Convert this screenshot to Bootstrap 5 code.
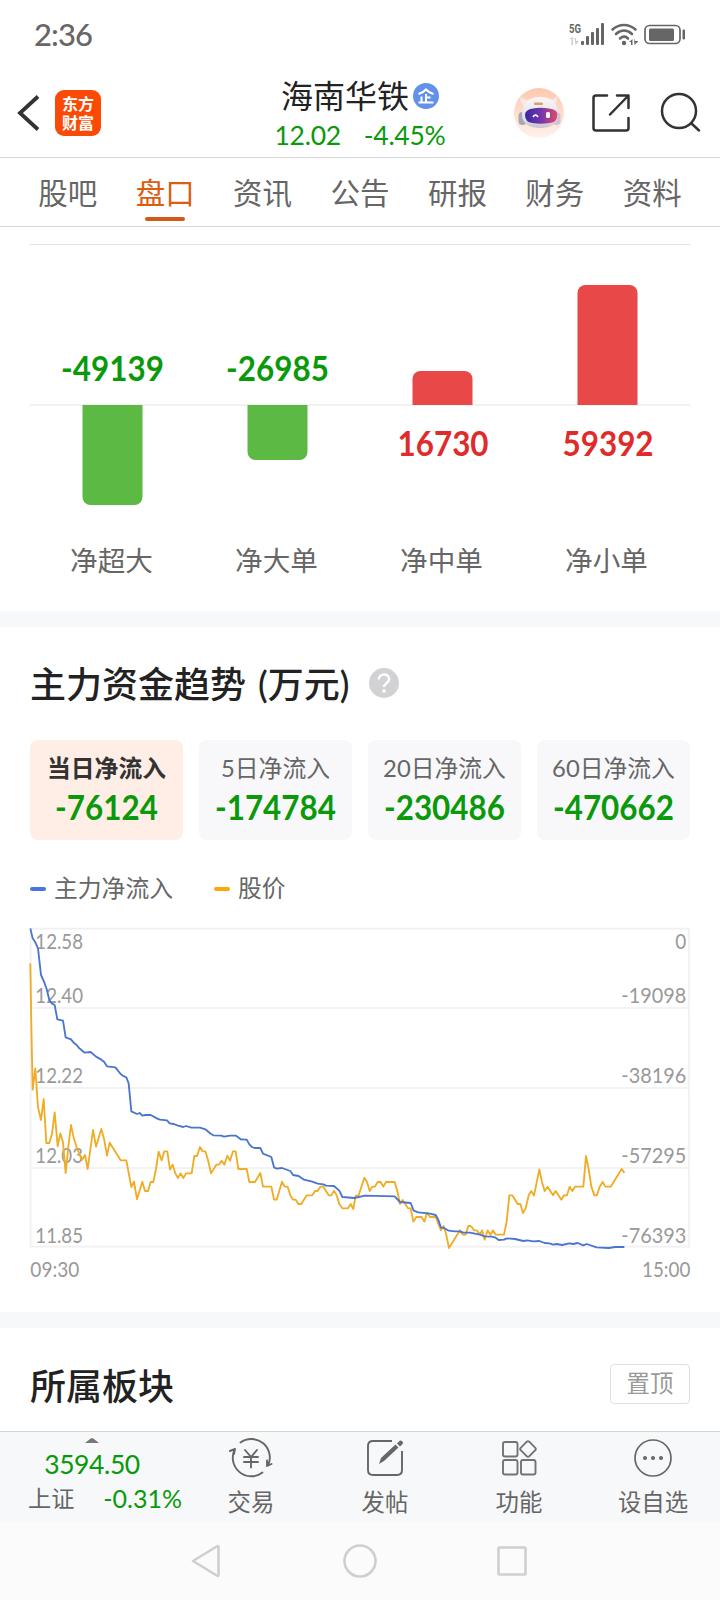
<!DOCTYPE html>
<html lang="zh-CN">
<head>
<meta charset="utf-8">
<meta name="viewport" content="width=device-width, initial-scale=1">
<title>海南华铁</title>
<link href="https://cdn.jsdelivr.net/npm/bootstrap@5.3.0/dist/css/bootstrap.min.css" rel="stylesheet">
<script src="https://cdn.jsdelivr.net/npm/bootstrap@5.3.0/dist/js/bootstrap.bundle.min.js"></script>
<style>
body{width:720px;height:1600px;overflow:hidden;background:#fff;color:#666;font-family:Lato,"Noto Sans CJK SC",sans-serif;font-size:24px;line-height:1}
svg{display:block;flex:none}
.down{color:#0a990a}
.up{color:#e02b2b}
.statusbar{height:68px;padding:0 34px 0 34px}
.clock{font-size:31px;letter-spacing:-.9px;font-weight:500}
.topbar{height:90px;border-bottom:1px solid #d4d6d8}
.side{width:240px;height:88px}
.logo{width:46px;height:46px;border-radius:9px;background:#fb4a05;color:#fff;font-size:16px;line-height:19px;font-weight:700}
.stock{font-size:32px;line-height:40px;color:#222}
.quote{font-size:26.5px;line-height:34px;letter-spacing:-.3px;padding-top:2px}
.tabs{height:69px;padding:0 19px;border-bottom:1px solid #d4d6d8}
.tabs a{flex:1;font-size:29.5px;line-height:70px;color:#666;text-decoration:none;text-align:center}
.tabs a.active{color:#dc5c10}
.tabs a.active::after{content:"";position:absolute;left:50%;bottom:5px;width:40px;height:4px;margin-left:-20px;border-radius:2px;background:#d2591a}
.flow{margin:17px 30px 0;height:367px;border-top:1px solid #e2e2e2}
.half{height:160px}
.half.upper{height:161px;border-bottom:2px solid #f1f1f2}
.half>div{width:165px}
.amount{font-size:34.5px;font-weight:700;line-height:40px}
.amount span{display:inline-block;transform:scaleX(.91)}
.bar-up,.bar-down{width:60px;transform:translateX(-.5px)}
.bar-up{background:#e84848;border-radius:8px 8px 0 0;margin-bottom:-1px}
.bar-down{background:#5bb944;border-radius:0 0 8px 8px;margin-top:-1px}
.flow-name{font-size:27.6px;line-height:40px;margin:-25px 1px 0 -1px}
.band{height:16px;background:#f7f8fa}
.heading{font-size:36px;line-height:48px;font-weight:500;color:#222}
.tile{flex:1;height:100px;border-radius:8px;background:#f8f8fa;padding-top:12px}
.tile .amount{margin:3px -10px 0}
.tile.active{background:#ffeee6}
.tile-name{font-size:23.8px;line-height:32px}
.tile.active .tile-name{color:#333;font-weight:700}
.key{width:16px;height:4px;border-radius:2px}
.pin{width:80px;height:40px;border:1px solid #e0e0e0;border-radius:4px;background:#fff;color:#999;font-size:23.4px}
.dock{height:91px;border-top:1px solid #d2d4d6;background:#f7f8fa}
.dock .index{width:184px}
.dock .item{width:134px;padding-top:6px}
.dock .label{font-size:23.4px;line-height:30px;margin-top:9px}
.sysnav{height:78px;background:#fbfbfb}
</style>
</head>
<body class="d-flex flex-column">

<div class="statusbar d-flex align-items-center justify-content-between">
  <span class="clock">2:36</span>
  <svg width="120" height="24" viewBox="566 22 120 24" fill="#666">
    <text x="569" y="33" font-family="Roboto" font-weight="700" font-size="12.5" textLength="12" lengthAdjust="spacingAndGlyphs">5G</text>
    <path d="M569 39l4-2v8h-1.500v-6zM574.500 38h1.500v3h3l-3.500 4z" fill="#ccc"/>
    <rect x="581" y="41" width="3" height="4" rx="1"/><rect x="586" y="36" width="3" height="9" rx="1"/><rect x="591" y="32" width="3" height="13" rx="1"/><rect x="596" y="28" width="3" height="17" rx="1"/><rect x="601" y="23" width="3" height="22" rx="1"/>
    <g fill="none" stroke="#666" stroke-width="2.600" stroke-linecap="round"><path d="M612.500 29.500c7-6 16-6 23 0M616 34c5-4.500 11-4.500 16 0M620 38.500c3-2.500 5.500-2.500 8 0"/></g>
    <circle cx="624" cy="43" r="2.200"/><path d="M629 42l3.500-3v6h-1.500v-3zM634 38l1 3h3.500l-4 4z"/>
    <rect x="645" y="25.500" width="35" height="18" rx="4.500" fill="none" stroke="#666" stroke-width="1.700"/><rect x="649" y="28.500" width="25" height="12.500" rx="1.500"/><rect x="682.500" y="29.500" width="2.500" height="10" rx="1"/>
  </svg>
</div>

<header class="topbar d-flex">
  <div class="side d-flex align-items-center">
    <svg class="ms-3" width="24" height="40" viewBox="16 92 24 40"><path d="M38 96.500L20 113l18 16.500" fill="none" stroke="#333" stroke-width="3.800"/></svg>
    <div class="logo d-flex flex-column justify-content-center text-center" style="margin:2px 0 0 15px"><span>东方</span><span>财富</span></div>
  </div>
  <div class="side d-flex flex-column align-items-center pt-2">
    <div class="stock d-flex align-items-center"><span>海南华铁</span>
      <svg class="ms-1" width="26" height="26" viewBox="0 0 26 26"><circle cx="13" cy="13" r="13" fill="#6390e8"/><path d="M5.500 11Q10.500 9.500 13 6.500 15.500 9.500 20.500 11M13 11v8M13 14.500h4.500M8.500 13.500V19M5.500 19.500h15" fill="none" stroke="#fff" stroke-width="2"/></svg>
    </div>
    <div class="quote down d-flex"><span>12.02</span><span style="margin-left:23px">-4.45%</span></div>
  </div>
  <div class="side d-flex">
    <svg width="240" height="88" viewBox="480 68 240 88">
      <defs><linearGradient id="halo" x1="0" y1="0" x2="0" y2="1"><stop offset="0" stop-color="#fcc8af"/><stop offset="1" stop-color="#fff2ec"/></linearGradient><linearGradient id="visor"><stop offset="0" stop-color="#352aa0"/><stop offset=".5" stop-color="#7836ac"/><stop offset="1" stop-color="#e14b6c"/></linearGradient><linearGradient id="shell" x1="0" y1="0" x2="0" y2="1"><stop offset="0" stop-color="#fbf6f5"/><stop offset=".7" stop-color="#e4e0e6"/><stop offset="1" stop-color="#c9c4ce"/></linearGradient></defs>
      <circle cx="539" cy="113" r="25" fill="url(#halo)"/>
      <path d="M520 97q0 6 5 10l6-6q-6-1-11-4zM557 96q1 7-4 10l-6-5q7-1 10-5z" fill="#f2e9e8"/>
      <rect x="518.500" y="112" width="8" height="13" rx="4" fill="#a9a6b4"/><rect x="552.500" y="112" width="8" height="13" rx="4" fill="#cdc5cf"/>
      <path d="M522 115c0-12 6-18 18-18s18 6 18 18c0 9-8 13-18 13s-18-4-18-13z" fill="url(#shell)"/>
      <rect x="534" y="102.500" width="9" height="2.500" rx="1" fill="#d8a06f"/>
      <path d="M533 108.500q8-1.500 16 0 8.500 1 8.500 6 0 8-8 8.500-9 1.500-17 0-7.500-1-7.500-8 0-5.500 8-6.500z" fill="url(#visor)"/>
      <path d="M533 117q2.500-4 5 0" fill="none" stroke="#fff" stroke-width="1.600"/><rect x="546" y="112" width="4" height="6" rx="1.500" fill="#fff"/>
      <g fill="none" stroke="#333" stroke-width="2.500" stroke-linecap="round" stroke-linejoin="round"><path d="M607 95.500h-11q-2.500 0-2.500 2.500v30q0 2.500 2.500 2.500h30q2.500 0 2.500-2.500v-10M617 95.500h11.500V108M628 96l-18 18.500"/><circle cx="679" cy="111" r="17"/><path d="M691.500 123.500l7.500 7"/></g>
    </svg>
  </div>
</header>

<nav class="tabs d-flex">
  <a href="#">股吧</a><a href="#" class="active position-relative">盘口</a><a href="#">资讯</a><a href="#">公告</a><a href="#">研报</a><a href="#">财务</a><a href="#">资料</a>
</nav>

<section class="flow text-center">
  <div class="half upper d-flex align-items-end">
    <div class="amount down" style="padding-bottom:16px"><span>-49139</span></div>
    <div class="amount down" style="padding-bottom:16px"><span>-26985</span></div>
    <div><div class="bar-up mx-auto" style="height:34px"></div></div>
    <div><div class="bar-up mx-auto" style="height:120px"></div></div>
  </div>
  <div class="half d-flex align-items-start">
    <div><div class="bar-down mx-auto" style="height:100px"></div></div>
    <div><div class="bar-down mx-auto" style="height:55px"></div></div>
    <div class="amount up" style="padding:17px 0 0 2px"><span>16730</span></div>
    <div class="amount up" style="padding:17px 0 0 2px"><span>59392</span></div>
  </div>
  <div class="flow-name row g-0"><div class="col">净超大</div><div class="col">净大单</div><div class="col">净中单</div><div class="col">净小单</div></div>
</section>

<div class="band"></div>

<section style="height:685px">
  <div class="heading d-flex align-items-center" style="height:81px;padding:33px 30px 0"><span>主力资金趋势</span><span style="margin-left:12px">(万元)</span>
    <svg style="margin-left:20px;margin-top:-2px" width="30" height="30" viewBox="0 0 30 30"><circle cx="15" cy="15" r="15" fill="#d2d2d5"/><path d="M9.800 11.500c0-6.500 10.400-6.500 10.400-.5 0 4-5.200 4.200-5.200 8" fill="none" stroke="#fff" stroke-width="2.500"/><circle cx="15" cy="23" r="1.800" fill="#fff"/></svg>
  </div>
  <div class="d-flex gap-3 text-center" style="padding:32px 30px 0">
    <div class="tile active"><div class="tile-name">当日净流入</div><div class="amount down"><span>-76124</span></div></div>
    <div class="tile"><div class="tile-name">5日净流入</div><div class="amount down"><span>-174784</span></div></div>
    <div class="tile"><div class="tile-name">20日净流入</div><div class="amount down"><span>-230486</span></div></div>
    <div class="tile"><div class="tile-name">60日净流入</div><div class="amount down"><span>-470662</span></div></div>
  </div>
  <div class="d-flex align-items-center" style="height:75px;padding:22px 30px 0;font-size:23.800px">
    <span class="key" style="background:#4a73e8"></span><span style="margin-left:8px">主力净流入</span>
    <span class="key" style="background:#fba90a;margin-left:41px"></span><span style="margin-left:8px">股价</span>
  </div>
  <!-- three chart units per pixel -->
  <svg width="720" height="380" viewBox="-60 0 2160 1140">
    <path d="M32 41H2007V995H32ZM32 279H2007M32 519H2007M32 759H2007" fill="none" stroke="#f0f0f1" stroke-width="5"/>
    <g fill="#999" font-size="61">
      <text x="46" y="102" textLength="143" lengthAdjust="spacingAndGlyphs">12.58</text><text x="46" y="265" textLength="143" lengthAdjust="spacingAndGlyphs">12.40</text><text x="46" y="505" textLength="143" lengthAdjust="spacingAndGlyphs">12.22</text><text x="46" y="745" textLength="143" lengthAdjust="spacingAndGlyphs">12.03</text><text x="46" y="984" textLength="143" lengthAdjust="spacingAndGlyphs">11.85</text>
      <g text-anchor="end"><text x="1999" y="102" textLength="33" lengthAdjust="spacingAndGlyphs">0</text><text x="1999" y="265" textLength="195" lengthAdjust="spacingAndGlyphs">-19098</text><text x="1999" y="505" textLength="195" lengthAdjust="spacingAndGlyphs">-38196</text><text x="1999" y="745" textLength="195" lengthAdjust="spacingAndGlyphs">-57295</text><text x="1999" y="984" textLength="195" lengthAdjust="spacingAndGlyphs">-76393</text><text x="2011" y="1086" textLength="145" lengthAdjust="spacingAndGlyphs">15:00</text></g>
      <text x="31" y="1086" textLength="147" lengthAdjust="spacingAndGlyphs">09:30</text>
    </g>
    <g fill="none" stroke-width="5.500" stroke-linejoin="round">
      <g stroke="#efac24"><polyline points="31,145 34,330 38,524 46,460 54,577 63,615 71,552 79,684 88,684 96,657 104,592 113,694 121,655 129,682 137,774 145,695 153,630 161,668 170,697 186,735 195,720 203,762 219,645 228,695 236,668 244,642 252,671 261,722 269,683 302,736 319,736 334,816 342,800 351,853 367,800 375,828 384,828 392,801 400,801 408,762 416,710 425,736 433,709 442,709 450,764 458,749 466,775 474,789 482,775 490,789 498,775 515,775 523,723 531,723 540,696 548,709 556,709 564,735 573,775 589,749 597,749 605,737 613,749 622,722 630,737 639,709 647,709 655,762 660,762"/>
      <polyline transform="translate(660)" points="-5,762 0,762 20,762 28,801 45,801 61,774 69,815 94,815 102,854 110,854 126,800 134,815 143,815 151,841 159,854 167,854 175,867 184,867 200,841 217,841 225,828 233,828 241,815 250,815 266,841 274,841 282,827 290,841 298,867 307,880 324,880 332,867 340,882 347,842 356,841 373,788 381,801 389,828 397,815 405,815 413,801 422,801 430,815 438,801 464,801 472,828 480,867 488,855 504,880 512,880 520,920 529,906 545,906 553,920 561,893 570,906 587,906 603,946 611,933 619,960 627,999 660,946 668,959 677,959 685,933 693,933"/>
      <polyline transform="translate(1350)" points="3,933 12,946 20,946 30,958 36,946 44,974 53,946 61,959 69,946 77,959 102,959 110,920 118,841 127,841 143,867 151,867 159,894 167,880 176,841 184,828 192,842 208,763 216,801 224,828 233,815 249,841 257,828 274,854 282,841 291,841 299,815 307,828 315,815 340,815 348,723 356,762 364,815 373,841 381,841 389,815 398,801 406,815 422,815 455,762 463,774"/></g>
      <g stroke="#4b74d0"><polyline points="31,40 38,70 46,82 54,100 63,180 72,200 80,222 88,255 95,265 104,270 112,313 129,317 137,367 153,373 161,383 170,390 178,400 194,413 212,411 228,425 244,434 252,440 261,454 286,457 302,477 310,483 319,487 326,505 334,589 351,597 359,594 367,602 376,600 392,600 412,611 420,614 441,616 449,625 461,627 474,632 490,636 498,633 514,638 540,638 556,643 572,656 580,661 604,662 612,665 630,662 648,662 662,673"/>
      <polyline transform="translate(660)" points="0,673 20,674 28,688 36,696 44,699 61,699 69,716 94,726 102,757 110,761 126,759 151,768 159,780 176,783 192,794 217,800 233,806 250,808 258,812 282,813 298,827 307,846 343,849 375,842 464,844 480,861 512,864 521,887 535,892 570,896 587,900 595,914 603,938 611,938 626,947 645,949 660,949 670,953 690,953"/>
      <polyline transform="translate(1350)" points="0,953 30,959 44,964 65,965 77,968 86,975 102,974 110,970 135,972 160,978 172,976 190,979 208,978 224,984 238,985 250,989 260,987 276,990 298,985 310,987 323,984 340,991 350,987 380,997 416,999 436,996 463,996"/></g>
    </g>
  </svg>
</section>

<div class="band"></div>

<section class="d-flex justify-content-between" style="height:103px;padding:34px 30px 0">
  <div class="heading">所属板块</div>
  <button class="pin p-0" style="margin-top:2px">置顶</button>
</section>

<footer class="dock d-flex">
  <div class="index">
    <svg class="mx-auto" style="margin-top:6px" width="14" height="5" viewBox="0 0 14 5"><path d="M0 5L6 .3h2L14 5z" fill="#777"/></svg>
    <div class="down text-center" style="font-size:26.500px;line-height:34px;margin-top:4px;letter-spacing:-.4px">3594.50</div>
    <div class="d-flex justify-content-between" style="padding:0 2px 0 28px;line-height:34px;font-size:23.200px"><span>上证</span><span class="down" style="font-size:25px">-0.31%</span></div>
  </div>
  <div class="item d-flex flex-column align-items-center">
    <svg width="44" height="40" viewBox="229 1438 44 40" fill="none" stroke="#666" stroke-width="1.900" stroke-linecap="round" stroke-linejoin="round"><path d="M240.500 1442.500A18.500 18.500 0 0 1 268 1465.500M262.500 1472.500A18.500 18.500 0 0 1 235 1449M229.800 1451L235 1449 234 1454M267 1460.500V1466L271.500 1464"/><path d="M245 1450L251 1457L257 1450M251 1457V1467.500M244 1457H258M244 1462H258"/></svg>
    <span class="label">交易</span>
  </div>
  <div class="item d-flex flex-column align-items-center">
    <svg width="44" height="40" viewBox="363 1438 44 40"><path d="M392 1441H373q-5 0-5 5v24q0 5 5 5h24q5 0 5-5V1451" fill="none" stroke="#666" stroke-width="1.900"/><path d="M379 1464l2-6 14.500-13.500 3 3-14.500 13.500zM397 1443.500l3-3q3 0 3 3l-3 3z" fill="#666"/></svg>
    <span class="label">发帖</span>
  </div>
  <div class="item d-flex flex-column align-items-center">
    <svg width="44" height="40" viewBox="497 1438 44 40" fill="none" stroke="#737373" stroke-width="1.900"><rect x="503" y="1442" width="14.500" height="14.500" rx="2"/><rect x="503" y="1460" width="14.500" height="14.500" rx="2"/><rect x="521" y="1460" width="14.500" height="14.500" rx="2"/><rect x="522" y="1443" width="12" height="12" rx="2" transform="rotate(45 528 1449)"/></svg>
    <span class="label">功能</span>
  </div>
  <div class="item d-flex flex-column align-items-center">
    <svg width="44" height="40" viewBox="631 1438 44 40"><circle cx="653" cy="1458" r="18" fill="none" stroke="#666" stroke-width="1.700"/><g fill="#666"><circle cx="645" cy="1458" r="2"/><circle cx="653" cy="1458" r="2"/><circle cx="661" cy="1458" r="2"/></g></svg>
    <span class="label">设自选</span>
  </div>
</footer>

<div class="sysnav">
  <svg width="720" height="78" viewBox="0 1522 720 78" fill="none" stroke="#cfcfcf" stroke-width="2.600" stroke-linejoin="round"><path d="M193 1561L217.500 1546q1 0 1 1V1575q0 1-1 1z"/><circle cx="360" cy="1561" r="15.500"/><rect x="498.500" y="1547.500" width="27" height="27" rx="1"/></svg>
</div>
</body>
</html>
